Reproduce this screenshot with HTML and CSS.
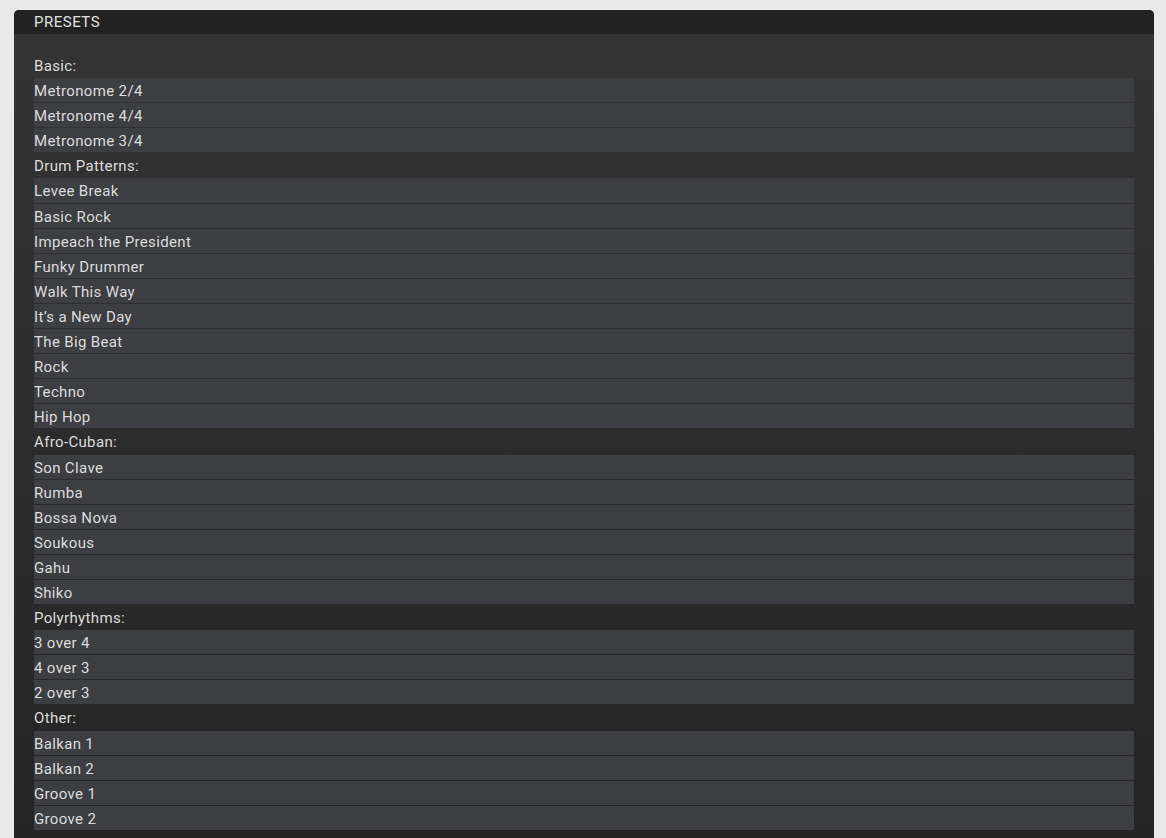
FILE: index.html
```html
<!DOCTYPE html>
<html lang="en">

<head>
    <meta charset="UTF-8">
    <meta name="viewport" content="width=device-width, initial-scale=1.0">
    <title>Presets</title>
    <link rel="stylesheet" href="styles.css">
</head>

<body>
    <div class="panel">
        <div class="panel-title">PRESETS</div>
        <ul class="presets">
            <li class="group">Basic:</li>
            <li>Metronome 2/4</li>
            <li>Metronome 4/4</li>
            <li>Metronome 3/4</li>
            <li class="group">Drum Patterns:</li>
            <li>Levee Break</li>
            <li>Basic Rock</li>
            <li>Impeach the President</li>
            <li>Funky Drummer</li>
            <li>Walk This Way</li>
            <li>It’s a New Day</li>
            <li>The Big Beat</li>
            <li>Rock</li>
            <li>Techno</li>
            <li>Hip Hop</li>
            <li class="group">Afro-Cuban:</li>
            <li>Son Clave</li>
            <li>Rumba</li>
            <li>Bossa Nova</li>
            <li>Soukous</li>
            <li>Gahu</li>
            <li>Shiko</li>
            <li class="group">Polyrhythms:</li>
            <li>3 over 4</li>
            <li>4 over 3</li>
            <li>2 over 3</li>
            <li class="group">Other:</li>
            <li>Balkan 1</li>
            <li>Balkan 2</li>
            <li>Groove 1</li>
            <li>Groove 2</li>
        </ul>
    </div>
</body>

</html>
```

FILE: styles.css
```css
html * {
    margin: 0;
    padding: 0;
}

body {
    background: #e9e9e9;
    padding: 10px 12px 0 14px;
    font-family: Roboto, "Liberation Sans", sans-serif;
    font-size: 15px;
    letter-spacing: 0.35px;
    color: #dcdcdc;
}

.panel {
    border-radius: 5px 5px 0 0;
    background: linear-gradient(#343434, #252525 820px);
    overflow: hidden;
}

.panel-title {
    height: 24px;
    line-height: 25px;
    padding: 0 20px;
    background: #222;
    color: #e2e2e2;
    letter-spacing: 0.5px;
}

/* list of presets */
.presets {
    list-style: none;
    padding: 19px 20px 8px;
}

.presets li {
    height: 24.1px;
    line-height: 26px;
    margin-bottom: 1px;
    background: #3d3e42;
    cursor: pointer;
}

.presets li.group {
    background: none;
    cursor: default;
}
```
